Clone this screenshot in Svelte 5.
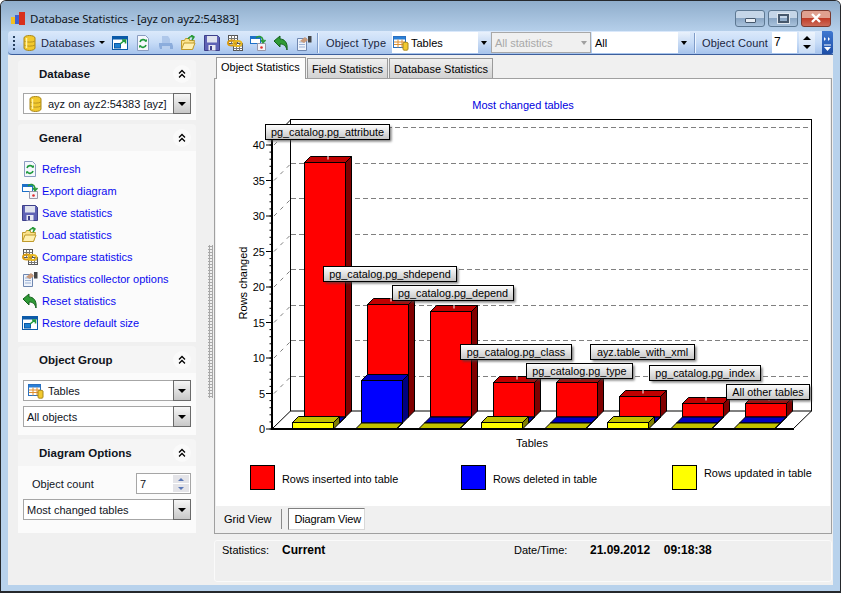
<script>
	const links = [
		['refresh', 'Refresh'],
		['exportd', 'Export diagram'],
		['save', 'Save statistics'],
		['load', 'Load statistics'],
		['compare', 'Compare statistics'],
		['options', 'Statistics collector options'],
		['reset', 'Reset statistics'],
		['restore', 'Restore default size']
	];
	const tools = ['restore', 'refresh', 'printer', 'load', 'save', 'compare', 'exportd', 'reset', 'options'];

	// chart data, in pixels of the drawn plot
	const W = 41;
	const D = 6;
	const STEP = 63;
	const redTops = [162.5, 304.5, 311.5, 382.5, 382.5, 396.5, 403.5, 403.5];
	const blueTops = [423, 380.5, 423, 423, 423, 423, 423, 423];
	const yellowTops = [422.5, 429, 429, 422.5, 429, 422.5, 429, 429];
	const ticks = [40, 35, 30, 25, 20, 15, 10, 5, 0];
	const gridYs = [127.5, 163.5, 198.5, 234.5, 269.5, 305.5, 340.5, 376.5];
	const minor = Array.from({ length: 41 }, (_, i) => 429 - i * 7.1);

	const tags = [
		{ x: 265.5, y: 124.5, w: 124, h: 15, text: 'pg_catalog.pg_attribute' },
		{ x: 323.5, y: 266.5, w: 133, h: 15, text: 'pg_catalog.pg_shdepend' },
		{ x: 392.5, y: 285.5, w: 121, h: 15, text: 'pg_catalog.pg_depend' },
		{ x: 460.5, y: 344.5, w: 111, h: 15, text: 'pg_catalog.pg_class' },
		{ x: 590.5, y: 344.5, w: 104, h: 15, text: 'ayz.table_with_xml' },
		{ x: 526.5, y: 363.5, w: 106, h: 15, text: 'pg_catalog.pg_type' },
		{ x: 649.5, y: 365.5, w: 111, h: 15, text: 'pg_catalog.pg_index' },
		{ x: 726.5, y: 384.5, w: 83, h: 15, text: 'All other tables' }
	];
	const legend = [
		{ x: 250.5, fill: '#ff0000', text: 'Rows inserted into table', tx: 282, ty: 483 },
		{ x: 461.5, fill: '#0000ff', text: 'Rows deleted in table', tx: 493, ty: 483 },
		{ x: 672.5, fill: '#ffff00', text: 'Rows updated in table', tx: 704, ty: 477 }
	];
	const RED = { front: '#ff0000', top: '#c00000', side: '#800000' };
	const BLUE = { front: '#0000ff', top: '#0000c0', side: '#000080' };
	const YELLOW = { front: '#ffff00', top: '#c0c000', side: '#808000' };
</script>

{#snippet icon(name)}
	<svg class="ico" viewBox="0 0 16 16" width="16" height="16">
		{#if name === 'db'}
			<path d="M2 3c0-3.300 11-3.300 11 0v10c0 3.300-11 3.300-11 0z" fill="#f2c92e" stroke="#a8861a" />
			<path d="M2 6c2 1.500 9 1.500 11 0M2 10c2 1.500 9 1.500 11 0" fill="none" stroke="#b8941f" />
			<path d="M4.500 3v10" stroke="#fff3a8" stroke-width="1.500" />
		{:else if name === 'restore'}
			<rect x="0.500" y="1.500" width="15" height="13" fill="#fff" stroke="#0b5aa8" />
			<rect x="1" y="2" width="14" height="2.500" fill="#0b5aa8" />
			<rect x="2.500" y="8.500" width="6" height="4.500" fill="#1d7fd0" stroke="#0b5aa8" />
			<path d="M8 9l5-4M10 5h3.500v3.500" fill="none" stroke="#1f9a3c" stroke-width="1.600" />
		{:else if name === 'refresh'}
			<path d="M2.500 0.500h8l3 3v12h-11z" fill="#f4f7fc" stroke="#8a9cc0" />
			<path d="M5 7a3.200 3.200 0 0 1 6-.5M11 10a3.200 3.200 0 0 1-6 .5" fill="none" stroke="#1f9a3c" stroke-width="1.600" />
			<path d="M9.500 6.500h2.500v-2.500M6.500 10.500h-2.500v2.500" fill="#1f9a3c" />
		{:else if name === 'printer'}
			<path d="M4 1h6l2 3v4H4z" fill="#a9c3e8" />
			<path d="M1 8h13l1 3v3H2l-1-3z" fill="#83a6d8" />
			<rect x="4" y="11" width="8" height="3" fill="#b9cfee" />
		{:else if name === 'load'}
			<path d="M0.500 5.500h3l1-2h4v2h5l-2 9h-11z" fill="#fbe28a" stroke="#bf9a2c" />
			<path d="M3 8h11l-2.500 6.500h-11z" fill="#fff0b0" stroke="#bf9a2c" />
			<path d="M7 4c1-2 3-3 5-2M10 0l3 2-2 3" fill="none" stroke="#2a9a3a" stroke-width="1.500" />
		{:else if name === 'save'}
			<path d="M0.500 0.500h13l2 2v13h-15z" fill="#5f62b5" stroke="#3d3f8a" />
			<rect x="3" y="1" width="10" height="6.500" fill="#dfe2ee" />
			<rect x="4.500" y="10" width="7" height="5.500" fill="#e8e8f2" />
			<rect x="6" y="11" width="2" height="4" fill="#3d3f8a" />
		{:else if name === 'compare'}
			<rect x="1.500" y="0.500" width="9" height="8" fill="#fff" stroke="#555" />
			<path d="M1.500 3.500h9M1.500 6h9M4.500 .5v8M7.500 .5v8" stroke="#777" />
			<rect x="6.500" y="8.500" width="9" height="7" fill="#fff" stroke="#555" />
			<path d="M6.500 11h9M6.500 13.500h9M9.500 8.500v7M12.500 8.500v7" stroke="#777" />
			<ellipse cx="5" cy="8" rx="4" ry="2.500" fill="none" stroke="#d99a10" stroke-width="2" />
			<ellipse cx="10.500" cy="8.500" rx="4" ry="2.500" fill="none" stroke="#e8b820" stroke-width="2" />
		{:else if name === 'exportd'}
			<rect x="0.500" y="1.500" width="10" height="7" fill="#fff" stroke="#1d70c8" />
			<rect x="1" y="2" width="9" height="2" fill="#1d70c8" />
			<path d="M7.500 8.500h8v7h-8z" fill="#f4f4fa" stroke="#99a" />
			<circle cx="11.500" cy="12.500" r="1.300" fill="#e03030" />
			<path d="M6 3c2-2.500 6-2 7 2v2M11 5l2 2.500 2.500-2.500" fill="none" stroke="#2a9a3a" stroke-width="1.600" />
		{:else if name === 'reset'}
			<path d="M1 6l6-5v3c4 0 8 3 7 11-1-4-3-6-7-6v3z" fill="#2f9a36" stroke="#14601c" />
		{:else if name === 'options'}
			<path d="M1.500 3.500h9v12h-9z" fill="#eef3fb" stroke="#6f87b0" />
			<path d="M3 7h6M3 9.500h6M3 12h6" stroke="#9db2d4" />
			<path d="M4 6l5-4 3 3-4 3z" fill="#c89a7a" />
			<rect x="12" y="1" width="3.500" height="6.500" fill="#444" />
		{:else if name === 'tables'}
			<rect x="0.500" y="1.500" width="12" height="11" fill="#fff" stroke="#2a70c0" />
			<rect x="1" y="2" width="11" height="2.500" fill="#2a80d8" />
			<path d="M1 7h11M1 9.500h11M5 4.500v8M9 4.500v8" stroke="#e09030" />
			<path d="M10 8c0-1 5-1 5 0v6.500c0 1-5 1-5 0z" fill="#f2c92e" stroke="#a8861a" />
		{/if}
	</svg>
{/snippet}

{#snippet groupHead(title)}
	<div class="group-head">
		<span>{title}</span>
		<svg class="collapse" width="10" height="10" viewBox="0 0 10 10">
			<path d="M2 4.500l3-3 3 3M2 8.500l3-3 3 3" fill="none" stroke="#000" stroke-width="1.300" />
		</svg>
	</div>
{/snippet}

{#snippet combo(iconName, text)}
	<div class="combo">
		{#if iconName}{@render icon(iconName)}{/if}
		<span class="combo-text">{text}</span>
		<div class="drop"><i class="arrow"></i></div>
	</div>
{/snippet}

{#snippet box(x, top, base, c)}
	<polygon points="{x},{top} {x + D},{top - D} {x + W + D},{top - D} {x + W},{top}" fill={c.top} stroke="#000" />
	<polygon points="{x + W},{top} {x + W + D},{top - D} {x + W + D},{base - D} {x + W},{base}" fill={c.side} stroke="#000" />
	{#if base > top}
		<rect x={x} y={top} width={W} height={base - top} fill={c.front} stroke="#000" />
	{/if}
{/snippet}

<div class="window">
	<header class="titlebar">
		<svg class="app-ico" width="15" height="14" viewBox="0 0 15 14">
			<rect x="0" y="5" width="4" height="7" fill="#f4c020" />
			<rect x="4" y="3" width="5" height="9" fill="#4060d0" />
			<rect x="8" y="0" width="6" height="13" fill="#d8301c" />
		</svg>
		<span class="title">Database Statistics - [ayz on ayz2:54383]</span>
		<div class="winbtns">
			<div class="winbtn"><i class="glyph-min"></i></div>
			<div class="winbtn"><i class="glyph-max"></i></div>
			<div class="winbtn close">
				<svg width="12" height="10" viewBox="0 0 12 10"><path d="M2 1l8 8M10 1l-8 8" stroke="#fff" stroke-width="2.400" /></svg>
			</div>
		</div>
	</header>

	<div class="toolbar">
		<div class="gripper"></div>
		{@render icon('db')}
		<span class="tb-label databases">Databases</span>
		<i class="arrow tb-arrow"></i>
		<div class="tools">
			{#each tools as t}
				<div class="tool" class:faded={t === 'printer'}>{@render icon(t)}</div>
			{/each}
		</div>
		<div class="tb-sep"></div>
		<span class="tb-label object-type">Object Type</span>
		<div class="tb-combo types">
			{@render icon('tables')}
			<span>Tables</span>
			<div class="tb-drop"><i class="arrow"></i></div>
		</div>
		<div class="tb-combo stats">
			<span>All statistics</span>
			<div class="tb-drop"><i class="arrow"></i></div>
		</div>
		<div class="tb-combo all">
			<span>All</span>
			<div class="tb-drop"><i class="arrow"></i></div>
		</div>
		<div class="tb-sep second"></div>
		<span class="tb-label object-count">Object Count</span>
		<div class="tb-input">7</div>
		<div class="tb-spin">
			<i class="arrow up"></i>
			<i class="arrow"></i>
		</div>
		<div class="chevron">
			<svg width="11" height="24" viewBox="0 0 11 24">
				<path d="M2 6l2 2-2 2zM6 6l2 2-2 2z" fill="#fff" />
				<path d="M2 14h7" stroke="#fff" />
				<path d="M2 16h7l-3.500 4z" fill="#fff" />
			</svg>
		</div>
	</div>

	<div class="main">
		<aside class="sidebar">
			<section class="group">
				{@render groupHead('Database')}
				<div class="group-body db-body">
					{@render combo('db', 'ayz on ayz2:54383 [ayz]')}
				</div>
			</section>
			<section class="group">
				{@render groupHead('General')}
				<div class="group-body links">
					{#each links as [ic, text]}
						<div class="link">{@render icon(ic)}<span>{text}</span></div>
					{/each}
				</div>
			</section>
			<section class="group">
				{@render groupHead('Object Group')}
				<div class="group-body stack">
					{@render combo('tables', 'Tables')}
					{@render combo(null, 'All objects')}
				</div>
			</section>
			<section class="group">
				{@render groupHead('Diagram Options')}
				<div class="group-body stack options">
					<div class="count-row">
						<span>Object count</span>
						<div class="spinner">
							<span>7</span>
							<div class="spin-btns">
								<div><i class="arrow up small"></i></div>
								<div><i class="arrow small"></i></div>
							</div>
						</div>
					</div>
					{@render combo(null, 'Most changed tables')}
				</div>
			</section>
		</aside>

		<div class="sash"><div class="dots"></div></div>

		<div class="content">
			<nav class="tabs">
				<div class="tab active">Object Statistics</div>
				<div class="tab">Field Statistics</div>
				<div class="tab">Database Statistics</div>
			</nav>
			<div class="panel">
				<svg class="chart" viewBox="216 79 614 427" width="614" height="427">
					<defs>
						<linearGradient id="tagfill" x1="0" y1="0" x2="0" y2="1">
							<stop offset="0" stop-color="#ffffff" />
							<stop offset="1" stop-color="#c4c4c4" />
						</linearGradient>
						<filter id="soft" x="-10%" y="-30%" width="120%" height="160%">
							<feGaussianBlur stdDeviation="0.8" />
						</filter>
					</defs>

					<text class="chart-title" x="523" y="109" text-anchor="middle">Most changed tables</text>

					<!-- walls and floor -->
					<rect x="290.5" y="119.5" width="521" height="291.500" fill="#fff" stroke="#000" />
					<path d="M272 429L290.500 411M793 429L811.500 411M272 139L290.500 120" stroke="#000" fill="none" />
					{#each gridYs as y}
						<line x1="291" x2="811" y1={y} y2={y} class="grid" />
					{/each}
					{#each ticks.slice(0, 8) as _, i}
						<line x1="274" x2="290" y1={145 + i * 35.5} y2={129 + i * 35.5} class="grid-diag" />
					{/each}

					{#each minor as y}
						<line x1="269.500" x2="272" y1={y} y2={y} stroke="#000" />
					{/each}
					{#each ticks as t, i}
						<line x1="266" x2="272" y1={145 + i * 35.5} y2={145 + i * 35.5} stroke="#000" />
						<text class="chart-text" x="265" y={149 + i * 35.5} text-anchor="end">{t}</text>
					{/each}

					{#each redTops as top, i}
						{@render box(304.5 + i * STEP, top, 417, RED)}
						<line x1={304.5 + i * STEP + 23.5} x2={304.5 + i * STEP + 23.5} y1={top - 7} y2={top - 3} stroke="#fff" />
					{/each}
					{#each blueTops as top, i}
						{@render box(298.5 + i * STEP, top, 423, BLUE)}
					{/each}
					{#each yellowTops as top, i}
						{@render box(292.5 + i * STEP, top, 429, YELLOW)}
					{/each}

					<!-- axes -->
					<path d="M272 139V430M271 429H794" stroke="#000" stroke-width="2" fill="none" />

					<text class="chart-text" x="532" y="447" text-anchor="middle">Tables</text>
					<text class="chart-text" transform="translate(247 283) rotate(-90)" text-anchor="middle">Rows changed</text>

					{#each tags as tag}
						<rect x={tag.x + 2} y={tag.y + 2} width={tag.w} height={tag.h} fill="#444" opacity="0.7" filter="url(#soft)" />
						<rect x={tag.x} y={tag.y} width={tag.w} height={tag.h} fill="url(#tagfill)" stroke="#000" />
						<text class="chart-text tag-text" x={tag.x + tag.w / 2} y={tag.y + 11.500} text-anchor="middle">{tag.text}</text>
					{/each}

					{#each legend as item}
						<rect x={item.x} y="465.500" width="24" height="24" fill={item.fill} stroke="#000" />
						<text class="legend-text" x={item.tx} y={item.ty}>{item.text}</text>
					{/each}
				</svg>
				<div class="viewbar">
					<span class="view">Grid View</span>
					<div class="view-sep"></div>
					<div class="view current">Diagram View</div>
				</div>
			</div>
			<div class="status">
				<span class="st-label">Statistics:</span>
				<b class="st-current">Current</b>
				<span class="st-date">Date/Time:</span>
				<b class="st-stamp">21.09.2012  09:18:38</b>
			</div>
		</div>
	</div>
</div>

<style>
	:global(body) {
		margin: 0;
		background: #fff;
	}

	.window {
		box-sizing: border-box;
		width: 841px;
		height: 593px;
		display: flex;
		flex-direction: column;
		font-family: 'Liberation Sans', Arial, sans-serif;
		font-size: 11px;
		color: #000;
		background: #b8d2ec;
		border: 1px solid #25282c;
		border-bottom-width: 2px;
		border-radius: 6px 6px 0 0;
		overflow: hidden;
	}

	/* title bar */
	.titlebar {
		flex: none;
		box-sizing: border-box;
		height: 30px;
		display: flex;
		align-items: center;
		padding: 5px 9px 0 10px;
		background: linear-gradient(#8fadcb, #b5cfea);
	}

	.app-ico {
		margin-right: 4px;
	}

	.title {
		flex: 1;
		font-family: 'Noto Sans', sans-serif;
		font-size: 11.500px;
		color: #10161c;
		letter-spacing: -0.2px;
	}

	.winbtns {
		display: flex;
		gap: 3px;
		margin-top: -1px;
	}

	.winbtn {
		box-sizing: border-box;
		width: 30px;
		height: 17px;
		border: 1px solid #5d7892;
		border-radius: 3px;
		background: linear-gradient(#c5d6e8 0 45%, #8aa6c4 50%, #a9c2dc);
		display: flex;
		align-items: center;
		justify-content: center;
	}

	.winbtn.close {
		background: linear-gradient(#e0a090 0 45%, #c03c28 50%, #cc6a58);
		border-color: #7a3a30;
	}

	.glyph-min {
		width: 9px;
		height: 3px;
		margin-top: 5px;
		background: #e8eef5;
		border: 1px solid #46586c;
		border-radius: 1px;
	}

	.glyph-max {
		width: 7px;
		height: 5px;
		background: transparent;
		border: 2px solid #46586c;
		outline: 1px solid #e0e8f0;
	}

	/* toolbar */
	.toolbar {
		flex: none;
		box-sizing: border-box;
		height: 24px;
		margin: 0 7px 0 7px;
		display: flex;
		align-items: center;
		padding-left: 5px;
		position: relative;
		border-radius: 4px 0 0 4px;
		background: linear-gradient(#dbe9fb, #c7dcf7 50%, #a6c3ec);
		border-bottom: 1px solid #3d5f9c;
	}

	.gripper {
		width: 2px;
		height: 14px;
		margin-right: 7px;
		background: repeating-linear-gradient(#26405f 0 2px, transparent 2px 4px);
	}

	.toolbar > .ico {
		margin-right: 2px;
	}

	.tb-label {
		font-size: 11px;
		letter-spacing: 0.15px;
		color: #1a2540;
		white-space: nowrap;
	}

	.databases {
		margin-left: 1px;
		width: 58px;
	}

	.arrow {
		display: block;
		width: 0;
		height: 0;
		border-left: 4px solid transparent;
		border-right: 4px solid transparent;
		border-top: 4px solid #000;
	}

	.arrow.up {
		border-top: 0;
		border-bottom: 4px solid #000;
	}

	.arrow.small {
		border-left-width: 3px;
		border-right-width: 3px;
		border-top-width: 3px;
		border-top-color: #5a78b8;
	}

	.arrow.up.small {
		border-top-width: 0;
		border-bottom: 3px solid #5a78b8;
	}

	.tb-arrow {
		margin-right: 3px;
		border-left-width: 3px;
		border-right-width: 3px;
		border-top-width: 3px;
	}

	.tools {
		display: flex;
		align-items: center;
	}

	.tool {
		width: 23px;
		display: flex;
		justify-content: center;
	}

	.ico {
		display: block;
		flex: none;
	}

	.tb-sep {
		width: 1px;
		height: 20px;
		margin: 0 8px 0 2px;
		background: #7f9cc8;
		box-shadow: 1px 0 0 #eef5ff;
	}

	.tb-sep.second {
		margin: 0 7px 0 3px;
	}

	.object-type {
		width: 66px;
	}

	.tb-combo {
		box-sizing: border-box;
		height: 21px;
		width: 98px;
		display: flex;
		align-items: center;
		background: #fff;
		font-size: 11px;
		padding-left: 1px;
		margin-right: 1px;
	}

	.tb-combo span {
		flex: 1;
		padding-left: 2px;
	}

	.tb-drop {
		width: 12px;
		align-self: stretch;
		display: flex;
		align-items: center;
		justify-content: center;
		background: linear-gradient(#eaf2fc, #a9c5ec);
	}

	.tb-drop .arrow {
		border-left-width: 3px;
		border-right-width: 3px;
		border-top-width: 4px;
	}

	.tb-combo.stats {
		width: 100px;
		background: #f0f0f0;
		border: 1px solid #a8a8a8;
		color: #a8a8a8;
	}

	.tb-combo.stats .tb-drop {
		background: #f0f0f0;
	}

	.tb-combo.stats .arrow {
		border-top-color: #a0a0a0;
	}

	.tb-combo.all {
		width: 98px;
	}

	.object-count {
		width: 70px;
	}

	.tb-input {
		box-sizing: border-box;
		width: 25px;
		height: 21px;
		padding: 4px 2px;
		background: #fff;
		font-size: 12px;
		line-height: 13px;
	}

	.tb-spin {
		box-sizing: border-box;
		width: 16px;
		height: 21px;
		margin-left: 2px;
		display: flex;
		flex-direction: column;
		align-items: center;
		justify-content: space-evenly;
		background: linear-gradient(#eef5fd, #c9dcf5);
	}

	.chevron {
		position: absolute;
		right: 0;
		top: 0;
		width: 11px;
		height: 23px;
		overflow: hidden;
		background: linear-gradient(#3f78d0, #1e4fa8);
		border-radius: 0 2px 2px 0;
	}

	/* body */
	.main {
		flex: 1;
		min-height: 0;
		display: flex;
		margin: 0 7px 6px 7px;
		background: #f0f0f0;
	}

	.sidebar {
		flex: none;
		box-sizing: border-box;
		width: 199px;
		padding: 5px 11px 0 10px;
		display: flex;
		flex-direction: column;
		gap: 4px;
	}

	.group-head {
		height: 27px;
		display: flex;
		align-items: center;
		justify-content: space-between;
		padding: 0 9px 0 21px;
		background: #f5f5f5;
		border-radius: 4px 4px 0 0;
		font-weight: bold;
		font-size: 11.500px;
		color: #10141c;
	}

	.collapse {
		padding: 4px;
		margin-right: -4px;
		background: #fafafa;
		border-radius: 50%;
	}

	.group-body {
		background: #fbfbfb;
	}

	.db-body {
		height: 33px;
		padding: 6px 5px 0;
		box-sizing: border-box;
	}

	.links {
		height: 191px;
		box-sizing: border-box;
		padding: 7px 4px 0;
	}

	.link {
		height: 22px;
		display: flex;
		align-items: center;
		gap: 4px;
		color: #0a0af0;
		font-size: 11px;
	}

	.stack {
		display: flex;
		flex-direction: column;
		gap: 5px;
		box-sizing: border-box;
		padding: 7px 5px 0;
		height: 62px;
	}

	.options {
		height: 67px;
	}

	.combo {
		box-sizing: border-box;
		height: 21px;
		flex: none;
		display: flex;
		align-items: center;
		padding-left: 1px;
		background: #fff;
		border: 1px solid #a6a6a6;
		font-size: 11px;
		color: #10141c;
	}

	.combo .ico {
		margin: 0 2px 0 3px;
	}

	.combo-text {
		flex: 1;
		padding-left: 2px;
		white-space: nowrap;
	}

	.drop {
		box-sizing: border-box;
		width: 18px;
		height: 21px;
		margin-right: -1px;
		border: 1px solid #6a6a6a;
		background: linear-gradient(#f6f6f6, #c8c8c8);
		display: flex;
		align-items: center;
		justify-content: center;
	}

	.count-row {
		display: flex;
		align-items: center;
		justify-content: space-between;
		padding-left: 9px;
		color: #10141c;
	}

	.spinner {
		box-sizing: border-box;
		width: 55px;
		height: 21px;
		padding-left: 3px;
		display: flex;
		align-items: center;
		justify-content: space-between;
		background: #fff;
		border: 1px solid #a6a6a6;
	}

	.spin-btns {
		width: 16px;
		margin-right: 1px;
		display: flex;
		flex-direction: column;
		gap: 1px;
	}

	.spin-btns div {
		height: 8px;
		display: flex;
		align-items: center;
		justify-content: center;
		background: #e4e4e8;
		border: 0 solid #bbb;
	}

	.sash {
		flex: none;
		width: 7px;
		padding-top: 190px;
	}

	.dots {
		width: 5px;
		height: 153px;
		margin-left: 1px;
		background:
			radial-gradient(circle, #a8a8a8 1px, transparent 1.200px) 0 0 / 3px 3px;
	}

	.content {
		flex: 1;
		min-width: 0;
		display: flex;
		flex-direction: column;
	}

	.tabs {
		flex: none;
		height: 23px;
		display: flex;
		align-items: flex-end;
		padding-left: 2px;
		gap: 1px;
	}

	.tab {
		box-sizing: border-box;
		height: 20px;
		padding: 0 4px;
		line-height: 21px;
		font-size: 11px;
		border: 1px solid #9a9a9a;
		border-bottom: 0;
		background: linear-gradient(#f0f0f0, #d2d2d2);
	}

	.tab.active {
		height: 22px;
		width: 90px;
		line-height: 19px;
		background: #fdfdfd;
		position: relative;
		top: 1px;
	}

	.panel {
		flex: none;
		box-sizing: border-box;
		height: 456px;
		margin-right: 1px;
		padding: 0 1px;
		border: 1px solid #a0a0a0;
		background: #f0f0f0;
		display: flex;
		flex-direction: column;
	}

	.chart {
		display: block;
		flex: none;
		background: #fff;
	}

	.chart-title {
		font-size: 11px;
		fill: #0000e0;
	}

	.chart-text {
		font-size: 11px;
		fill: #000;
	}

	.tag-text {
		font-size: 10.800px;
	}

	.legend-text {
		font-size: 10.900px;
		fill: #000;
	}

	.grid {
		stroke: #808080;
		stroke-dasharray: 5 3;
	}

	.grid-diag {
		stroke: #808080;
		stroke-dasharray: 4 5;
	}

	.viewbar {
		flex: 1;
		display: flex;
		align-items: center;
		padding: 0 0 2px 8px;
		font-size: 11px;
	}

	.view-sep {
		width: 1px;
		height: 20px;
		margin: 0 6px 0 10px;
		background: #8a8a8a;
	}

	.view.current {
		box-sizing: border-box;
		width: 77px;
		height: 22px;
		line-height: 20px;
		padding-left: 5px;
		letter-spacing: -0.15px;
		background: #fff;
		border: 1px solid #d8d8d8;
		border-top-color: #808080;
		border-left-color: #808080;
	}

	.status {
		flex: none;
		box-sizing: border-box;
		height: 42px;
		margin-top: 6px;
		margin-right: 1px;
		padding: 3px 0 0 7px;
		display: flex;
		align-items: flex-start;
		line-height: 13px;
		background: #efefef;
		border: 1px solid #fafafa;
		border-radius: 3px;
	}

	.st-label {
		width: 60px;
	}

	.st-current {
		width: 232px;
		font-size: 12px;
	}

	.st-date {
		width: 76px;
	}

	.st-stamp {
		white-space: pre;
		font-size: 12px;
		word-spacing: 3.500px;
	}

	.faded {
		opacity: 0.85;
	}
</style>
